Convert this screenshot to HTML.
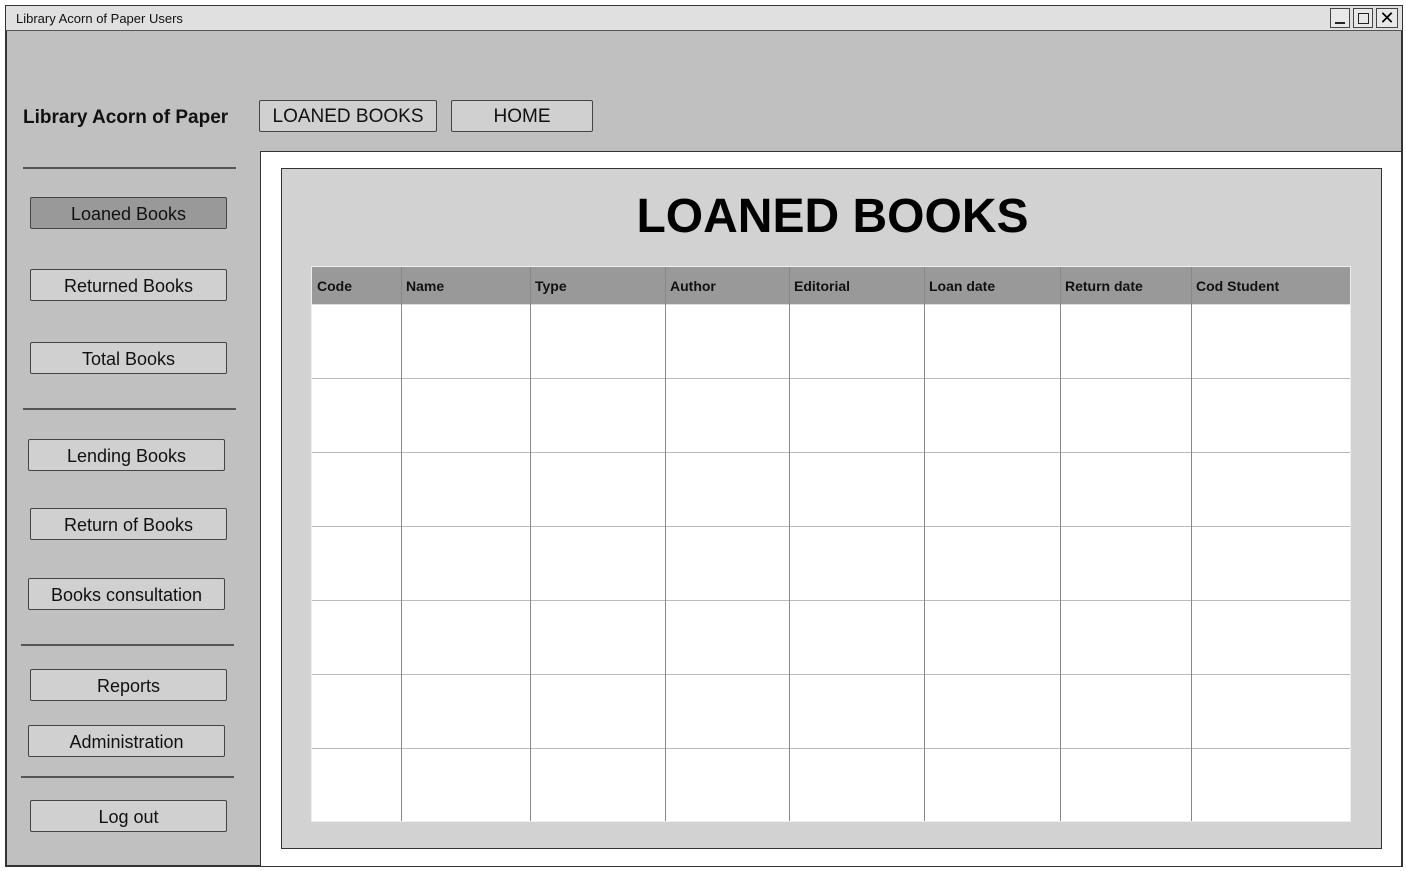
<!DOCTYPE html>
<html><head><style>
*{margin:0;padding:0;box-sizing:border-box}
body{width:1406px;height:871px;background:#fff;position:relative;font-family:"Liberation Sans",sans-serif;overflow:hidden}
.a{position:absolute}
.btn{position:absolute;border:1.5px solid #444;background:#d0d0d0;font-size:18px;color:#111;text-align:center;border-radius:2px;display:flex;align-items:center;justify-content:center;padding-top:2px}
.sep{position:absolute;height:2px;background:#555}
.th{position:absolute;top:0;height:37px;font-size:14px;font-weight:bold;color:#111;line-height:39px;padding-left:5px}
</style></head><body>
<div class="a" style="left:5px;top:5px;width:1398px;height:862px;border:2px solid #333;background:#c0c0c0"></div>
<div class="a" style="left:6px;top:6px;width:1396px;height:25px;background:#e0e0e0;border-bottom:1.5px solid #555"></div>
<div class="a" style="left:16px;top:11px;font-size:13px;color:#111">Library Acorn of Paper Users</div>
<div class="a" style="left:1330px;top:8px;width:20px;height:20px;border:1px solid #444;background:#e8e8e8"><div class="a" style="left:4px;top:13px;width:10px;height:2px;background:#222"></div></div>
<div class="a" style="left:1353px;top:8px;width:20px;height:20px;border:1px solid #444;background:#e8e8e8"><div class="a" style="left:4px;top:4px;width:11px;height:11px;border:1.5px solid #222"></div></div>
<div class="a" style="left:1376px;top:8px;width:22px;height:20px;border:1px solid #444;background:#e8e8e8;font-size:18px;line-height:18px;text-align:center">✕</div>

<div class="a" style="left:23px;top:107px;font-size:19px;font-weight:bold;color:#111">Library Acorn of Paper</div>
<div class="btn" style="left:259px;top:100px;width:178px;height:32px;font-size:19px">LOANED BOOKS</div>
<div class="btn" style="left:451px;top:100px;width:142px;height:32px;font-size:19px">HOME</div>

<div class="sep" style="left:23px;top:167px;width:213px"></div>
<div class="btn" style="left:30px;top:197px;width:197px;height:32px;background:#999">Loaned Books</div>
<div class="btn" style="left:30px;top:269px;width:197px;height:32px">Returned Books</div>
<div class="btn" style="left:30px;top:342px;width:197px;height:32px">Total Books</div>
<div class="sep" style="left:23px;top:408px;width:213px"></div>
<div class="btn" style="left:28px;top:439px;width:197px;height:32px">Lending Books</div>
<div class="btn" style="left:30px;top:508px;width:197px;height:32px">Return of Books</div>
<div class="btn" style="left:28px;top:578px;width:197px;height:32px">Books consultation</div>
<div class="sep" style="left:21px;top:644px;width:213px"></div>
<div class="btn" style="left:30px;top:669px;width:197px;height:32px">Reports</div>
<div class="btn" style="left:28px;top:725px;width:197px;height:32px">Administration</div>
<div class="sep" style="left:21px;top:776px;width:213px"></div>
<div class="btn" style="left:30px;top:800px;width:197px;height:32px">Log out</div>

<div class="a" style="left:260px;top:151px;width:1143px;height:716px;background:#fff;border:1.5px solid #333;border-right:2px solid #333"></div>
<div class="a" style="left:281px;top:168px;width:1101px;height:681px;background:#d2d2d2;border:1.5px solid #333"></div>
<div class="a" style="left:281px;top:189px;width:1101px;text-align:center;font-size:48px;font-weight:bold;color:#000;padding-left:2px">LOANED BOOKS</div>

<div class="a" style="left:311px;top:266px;width:1040px;height:556px;background:#fff;border:1.5px solid #eee">
<div class="a" style="left:0;top:0;width:1038px;height:37px;background:#999"></div>
<div class="th" style="left:0">Code</div>
<div class="th" style="left:89px">Name</div>
<div class="th" style="left:218px">Type</div>
<div class="th" style="left:353px">Author</div>
<div class="th" style="left:477px">Editorial</div>
<div class="th" style="left:612px">Loan date</div>
<div class="th" style="left:748px">Return date</div>
<div class="th" style="left:879px">Cod Student</div>
<svg class="a" style="left:0;top:0" width="1038" height="554">
<g stroke="#bbb" stroke-width="1">
<line x1="0" y1="111.5" x2="1038" y2="111.5"/><line x1="0" y1="185.5" x2="1038" y2="185.5"/><line x1="0" y1="259.5" x2="1038" y2="259.5"/><line x1="0" y1="333.5" x2="1038" y2="333.5"/><line x1="0" y1="407.5" x2="1038" y2="407.5"/><line x1="0" y1="481.5" x2="1038" y2="481.5"/>
</g>
<line x1="0" y1="37.5" x2="1038" y2="37.5" stroke="#ddd"/>
<g stroke="#888" stroke-width="1">
<line x1="89.5" y1="0" x2="89.5" y2="554"/><line x1="218.5" y1="0" x2="218.5" y2="554"/><line x1="353.5" y1="0" x2="353.5" y2="554"/><line x1="477.5" y1="0" x2="477.5" y2="554"/><line x1="612.5" y1="0" x2="612.5" y2="554"/><line x1="748.5" y1="0" x2="748.5" y2="554"/><line x1="879.5" y1="0" x2="879.5" y2="554"/>
</g>
</svg>
</div>
</body></html>
